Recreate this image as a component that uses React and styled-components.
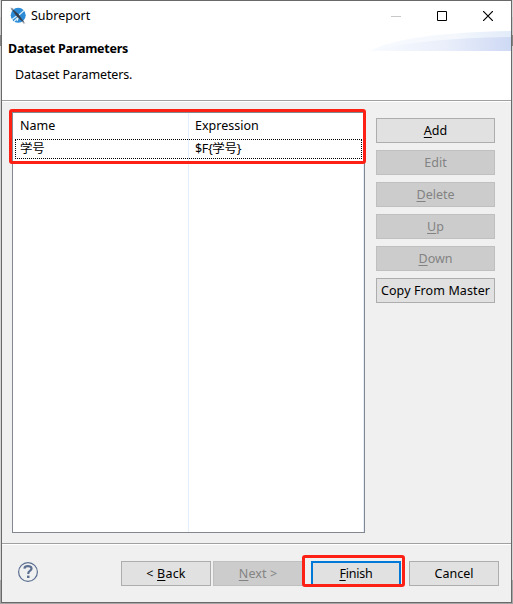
import React from "react";
import styled, { createGlobalStyle } from "styled-components";

const GlobalStyle = createGlobalStyle`
  * { box-sizing: border-box; }
  body {
    margin: 0;
    overflow: hidden;
    font-family: "Noto Sans", "Noto Sans CJK SC", sans-serif;
    font-size: 12.5px;
    color: #000;
  }
`;

const Desktop = styled.div`
  width: 513px;
  height: 604px;
  padding: 0 1px;
  background: linear-gradient(#d8d8d8 0 17px, #c9c9c9 17px 35px, #858585 35px 46px, #d5d5d5 46px 580px, #a6a6a6 580px);
`;

const Window = styled.div`
  display: flex;
  flex-direction: column;
  width: 511px;
  height: 603px;
  background: #f0f0f0;
  border: 1px solid #696969;
`;

const TitleBar = styled.header`
  display: flex;
  align-items: center;
  height: 30px;
  padding-left: 7px;
  background: #fff;
`;

const Title = styled.span`
  flex: 1;
  margin-left: 4px;
  line-height: 18px;
`;

const WindowButton = styled.span`
  display: flex;
  align-items: center;
  justify-content: center;
  width: 46px;
  height: 30px;
  padding-bottom: 1px;
`;

const Banner = styled.section`
  display: flex;
  justify-content: space-between;
  height: 70px;
  background: #fff;
  border-bottom: 1px solid #a0a0a0;
`;

const BannerText = styled.div`
  padding: 9px 0 0 6px;
`;

const Heading = styled.h1`
  margin: 0;
  font-size: 12.5px;
  line-height: 18px;
  letter-spacing: -0.24px;
  white-space: nowrap;
`;

const Description = styled.p`
  margin: 8px 0 0 7px;
  line-height: 18px;
  letter-spacing: -0.13px;
`;

const Content = styled.main`
  display: flex;
  align-items: flex-start;
  gap: 11px;
  height: 443px;
  padding: 10px 0 0 10px;
  border-top: 1px solid #fff;
  border-bottom: 1px solid #a0a0a0;
`;

const Table = styled.div`
  position: relative;
  display: flex;
  flex-direction: column;
  width: 353px;
  height: 421px;
  padding: 1px 2px;
  border: 1px solid #828790;
  background: linear-gradient(#e5effb, #e5effb) 175px 0 / 1px 100% no-repeat,
    linear-gradient(#e5effb, #e5effb) 350px 0 / 1px 100% no-repeat, #fff;
`;

const Row = styled.div`
  display: grid;
  grid-template-columns: 175px 1fr;
  align-items: center;
  height: ${(p) => (p.$header ? 25 : 20)}px;
  ${(p) => p.$header && "padding-bottom: 2px;"}
  ${(p) => !p.$header && "outline: 1px dotted #000; outline-offset: -1px;"}
`;

const Cell = styled.span`
  padding-left: 5px;
  line-height: 18px;
  letter-spacing: ${(p) => p.$spacing || 0}px;
`;

const Highlight = styled.div`
  position: absolute;
  z-index: 2;
  pointer-events: none;
  border: 3px solid #fd2015;
  border-radius: 3px;
`;

const TableHighlight = styled(Highlight)`
  inset: -4px -2px auto -4px;
  height: 55px;
`;

const FinishHighlight = styled(Highlight)`
  inset: -6px -4px -1px -9px;
`;

const Actions = styled.div`
  display: flex;
  flex-direction: column;
  gap: 7px;
  padding-top: 6px;
`;

const PushButton = styled.button`
  display: flex;
  align-items: center;
  justify-content: center;
  width: ${(p) => p.$width}px;
  height: 25px;
  padding: 0;
  background: #e1e1e1;
  border: 1px solid #adadad;
  color: #000;
  font: inherit;
  letter-spacing: ${(p) => p.$spacing || 0}px;
  white-space: pre;
  &:disabled { background: #ccc; border-color: #bfbfbf; color: #838383; }
  ${(p) => p.$primary && "border: 2px solid #0078d7;"}
  u { text-underline-offset: 2px; text-decoration-thickness: 1px; text-decoration-skip-ink: none; }
`;

const Footer = styled.footer`
  display: flex;
  flex: 1;
  align-items: flex-start;
  padding: 16px 12px 0 15px;
  border-top: 1px solid #fff;
`;

const HelpIcon = styled.svg`
  display: block;
  margin-right: auto;
`;

const ButtonPair = styled.div`
  display: flex;
  gap: 2px;
  margin-right: 8px;
`;

const FinishSlot = styled.div`
  position: relative;
  margin-right: 8px;
`;

function AppIcon() {
  return (
    <svg width="18" height="18" viewBox="0 0 18 18">
      <circle cx="9.2" cy="8.2" r="7.5" fill="#2b8bd6" />
      <path d="M3 12.5 9 8M5 14.5 10 9.5M10 8 15 3.5M8 14 9.5 10.5" stroke="#e2f2fc" strokeWidth="1.1" />
      <path d="M2.5 1.5 9 7 15 15.5 8 9.5Z" fill="#343c48" stroke="#343c48" strokeWidth=".6" />
      <path d="m1.5.5 3 1-2 2ZM13.5 14.5l3.2 1.8-2.7.2Z" fill="#9b9fa6" />
    </svg>
  );
}

function Swoosh() {
  return (
    <svg width="142" height="20" viewBox="0 0 142 20">
      <defs>
        <linearGradient id="wash">
          <stop offset="0" stopColor="#f9fbff" />
          <stop offset=".55" stopColor="#e9eefa" />
          <stop offset="1" stopColor="#ced9f4" />
        </linearGradient>
        <linearGradient id="edge">
          <stop offset="0" stopColor="#f7fafe" />
          <stop offset=".6" stopColor="#f4f8fd" />
          <stop offset="1" stopColor="#e2ebf9" />
        </linearGradient>
      </defs>
      <path d="M1 20Q34 2 142 0V20Z" fill="url(#edge)" />
      <path d="M1 20Q54 7 142 6V20Z" fill="url(#wash)" />
    </svg>
  );
}

const parameters = [{ name: "学号", expression: "$F{学号}" }];

const actions = [
  { text: <><u>A</u>dd</> },
  { text: "Edit", disabled: true },
  { text: <><u>D</u>elete</>, disabled: true },
  { text: <><u>U</u>p</>, disabled: true },
  { text: <><u>D</u>own</>, disabled: true },
  { text: "Copy From Master", spacing: 0.1 },
];

export default function App() {
  return (
    <>
      <GlobalStyle />
      <Desktop>
        <Window>
          <TitleBar>
            <AppIcon />
            <Title>Subreport</Title>
            <WindowButton><svg width="10" height="10"><path d="M0 5.5H10" stroke="#c8c8c8" /></svg></WindowButton>
            <WindowButton><svg width="10" height="10"><path d="M.5.5h9v9h-9Z" stroke="#000" fill="none" /></svg></WindowButton>
            <WindowButton><svg width="10" height="10"><path d="m0 0 10 10M10 0 0 10" stroke="#000" strokeWidth="1.2" /></svg></WindowButton>
          </TitleBar>
          <Banner>
            <BannerText>
              <Heading>Dataset Parameters</Heading>
              <Description>Dataset Parameters.</Description>
            </BannerText>
            <Swoosh />
          </Banner>
          <Content>
            <Table>
              <Row $header><Cell>Name</Cell><Cell>Expression</Cell></Row>
              {parameters.map((p) => (
                <Row key={p.name}><Cell $spacing={-0.3}>{p.name}</Cell><Cell $spacing={-0.35}>{p.expression}</Cell></Row>
              ))}
              <TableHighlight />
            </Table>
            <Actions>
              {actions.map((a, i) => (
                <PushButton key={i} $width={119} $spacing={a.spacing} disabled={a.disabled}><span>{a.text}</span></PushButton>
              ))}
            </Actions>
          </Content>
          <Footer>
            <HelpIcon width="22" height="22" viewBox="0 0 22 22" fill="none">
              <circle cx="11" cy="11" r="9.4" stroke="#5c6f91" strokeWidth="1.2" />
              <path d="M7.4 7.6Q7.8 5.2 10.8 5.2C15.4 5.2 15.3 8.6 12.6 10.1Q11.2 11 11.2 13" stroke="#5c6f91" strokeWidth="2.2" />
              <path d="M10 14.6h2.5v2.4H10Z" fill="#5c6f91" />
            </HelpIcon>
            <ButtonPair>
              <PushButton $width={90} $spacing={0.2}><span>{"< "}<u>B</u>ack</span></PushButton>
              <PushButton $width={90} $spacing={0.1} disabled><span><u>N</u>ext &gt;</span></PushButton>
            </ButtonPair>
            <FinishSlot>
              <PushButton $width={90} $spacing={-0.2} $primary><span><u>F</u>inish</span></PushButton>
              <FinishHighlight />
            </FinishSlot>
            <PushButton $width={90}>Cancel</PushButton>
          </Footer>
        </Window>
      </Desktop>
    </>
  );
}
